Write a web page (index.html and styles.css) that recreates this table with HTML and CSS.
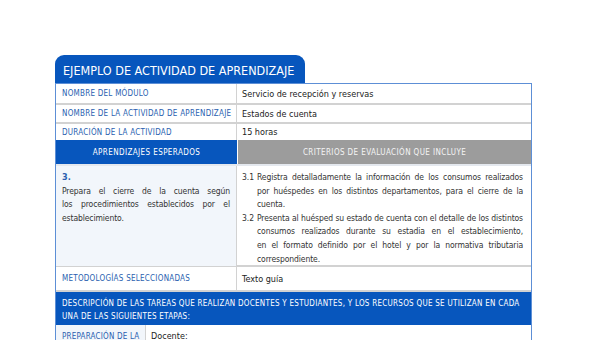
FILE: index.html
```html
<!DOCTYPE html>
<html lang="es">
<head>
<meta charset="utf-8">
<link rel="stylesheet" href="styles.css">
</head>
<body>
<div class="page">
  <div class="tab">EJEMPLO DE ACTIVIDAD DE APRENDIZAJE</div>
  <div class="sheet">
    <div class="row r1">
      <div class="lab">NOMBRE DEL MÓDULO</div>
      <div class="val">Servicio de recepción y reservas</div>
    </div>
    <div class="row r2">
      <div class="lab">NOMBRE DE LA ACTIVIDAD DE APRENDIZAJE</div>
      <div class="val">Estados de cuenta</div>
    </div>
    <div class="row r3">
      <div class="lab">DURACIÓN DE LA ACTIVIDAD</div>
      <div class="val">15 horas</div>
    </div>
    <div class="row head">
      <div class="hblue">APRENDIZAJES ESPERADOS</div>
      <div class="hgrey">CRITERIOS DE EVALUACIÓN QUE INCLUYE</div>
    </div>
    <div class="row content">
      <div class="aprend">
        <div class="num">3.</div>
        <p class="txt"><span class="ln">Prepara el cierre de la cuenta según</span><span class="ln">los procedimientos establecidos por el</span><span class="ln end">establecimiento.</span></p>
      </div>
      <div class="crit">
        <div class="item"><span class="n">3.1</span><p class="txt"><span class="ln">Registra detalladamente la información de los consumos realizados</span><span class="ln">por huéspedes en los distintos departamentos, para el cierre de la</span><span class="ln end">cuenta.</span></p></div>
        <div class="item"><span class="n">3.2</span><p class="txt"><span class="ln">Presenta al huésped su estado de cuenta con el detalle de los distintos</span><span class="ln">consumos realizados durante su estadia en el establecimiento,</span><span class="ln">en el formato definido por el hotel y por la normativa tributaria</span><span class="ln end">correspondiente.</span></p></div>
      </div>
    </div>
    <div class="row r4">
      <div class="lab">METODOLOGÍAS SELECCIONADAS</div>
      <div class="val">Texto guía</div>
    </div>
    <div class="desc"><span class="line">DESCRIPCIÓN DE LAS TAREAS QUE REALIZAN DOCENTES Y ESTUDIANTES, Y LOS RECURSOS QUE SE UTILIZAN EN CADA</span><span class="line">UNA DE LAS SIGUIENTES ETAPAS:</span></div>
    <div class="row last">
      <div class="lab2">PREPARACIÓN DE LA</div>
      <div class="val2">Docente:</div>
    </div>
  </div>
</div>
</body>
</html>
```

FILE: styles.css
```css
html, body {
  margin: 0;
  padding: 0;
  background: #ffffff;
}
body {
  font-family: "DejaVu Sans Condensed", "Liberation Sans", sans-serif;
  font-size: 9px;
  color: #333333;
  overflow: hidden;
  height: 340px;
}
.page {
  padding: 55px 0 0 55px;
  width: 477px;
}
.tab {
  width: 250px;
  height: 28px;
  box-sizing: border-box;
  background: #0756bd;
  color: #ffffff;
  border-radius: 9px 9px 0 0;
  font-size: 12.5px;
  line-height: 31px;
  padding-left: 8px;
  white-space: nowrap;
}
.sheet {
  border: 1px solid #5d8fd6;
  background: #ffffff;
}
.row {
  display: grid;
  grid-template-columns: 181px 1fr;
  border-bottom: 2px solid #d2d2d2;
}
.row > div {
  box-sizing: border-box;
}
.lab {
  color: #2a5fb0;
  font-size: 8px;
  letter-spacing: 0.25px;
  padding-left: 6px;
  border-right: 1px solid #d2d2d2;
  display: flex;
  align-items: center;
  white-space: nowrap;
}
.val {
  padding-left: 5px;
  display: flex;
  align-items: center;
  color: #222222;
}
.r1 { height: 19px; }
.r2 { height: 17px; }
.r3 { height: 16px; border-bottom: none; }
.head {
  height: 24px;
  border-bottom: 2px solid #e4e8ee;
}
.hblue {
  background: #0756bd;
  color: #ffffff;
  font-size: 8px;
  letter-spacing: 0.4px;
  display: flex;
  align-items: center;
  justify-content: center;
}
.hgrey {
  background: #9c9c9c;
  color: #f4f4f4;
  font-size: 8px;
  letter-spacing: 0.4px;
  display: flex;
  align-items: center;
  justify-content: center;
  border-left: 1px solid #ffffff;
}
.content {
  height: 99px;
}
.aprend {
  background: #f2f6fb;
  padding: 5px 6px 0 6px;
  line-height: 13.5px;
  border-right: 1px solid #d2d2d2;
}
.num {
  color: #2a5fb0;
  font-weight: bold;
}
.txt {
  margin: 0;
  flex: 1;
  min-width: 0;
  font-size: 8.5px;
  letter-spacing: -0.1px;
}
.ln {
  display: block;
  text-align: justify;
  text-align-last: justify;
}
.ln.end {
  text-align-last: left;
}
.crit {
  padding: 5px 8px 0 5px;
  line-height: 13.6px;
}
.item {
  display: flex;
}
.item .n {
  width: 15px;
  flex: none;
  font-size: 8.5px;
}
.r4 {
  height: 23px;
}
.desc {
  background: #0756bd;
  color: #ffffff;
  font-size: 8px;
  letter-spacing: 0.26px;
  padding: 5px 6px 0 6px;
  line-height: 13px;
  height: 33px;
  box-sizing: border-box;
}
.desc .line {
  display: block;
  white-space: nowrap;
}
.last {
  grid-template-columns: 90px 1fr;
  height: 30px;
  border-bottom: none;
}
.lab2 {
  background: #f2f6fb;
  color: #2a5fb0;
  font-size: 8px;
  letter-spacing: 0.2px;
  padding: 7px 0 0 6px;
  border-right: 1px solid #d2d2d2;
  white-space: nowrap;
}
.val2 {
  padding: 6px 0 0 5px;
  color: #222222;
}
```
